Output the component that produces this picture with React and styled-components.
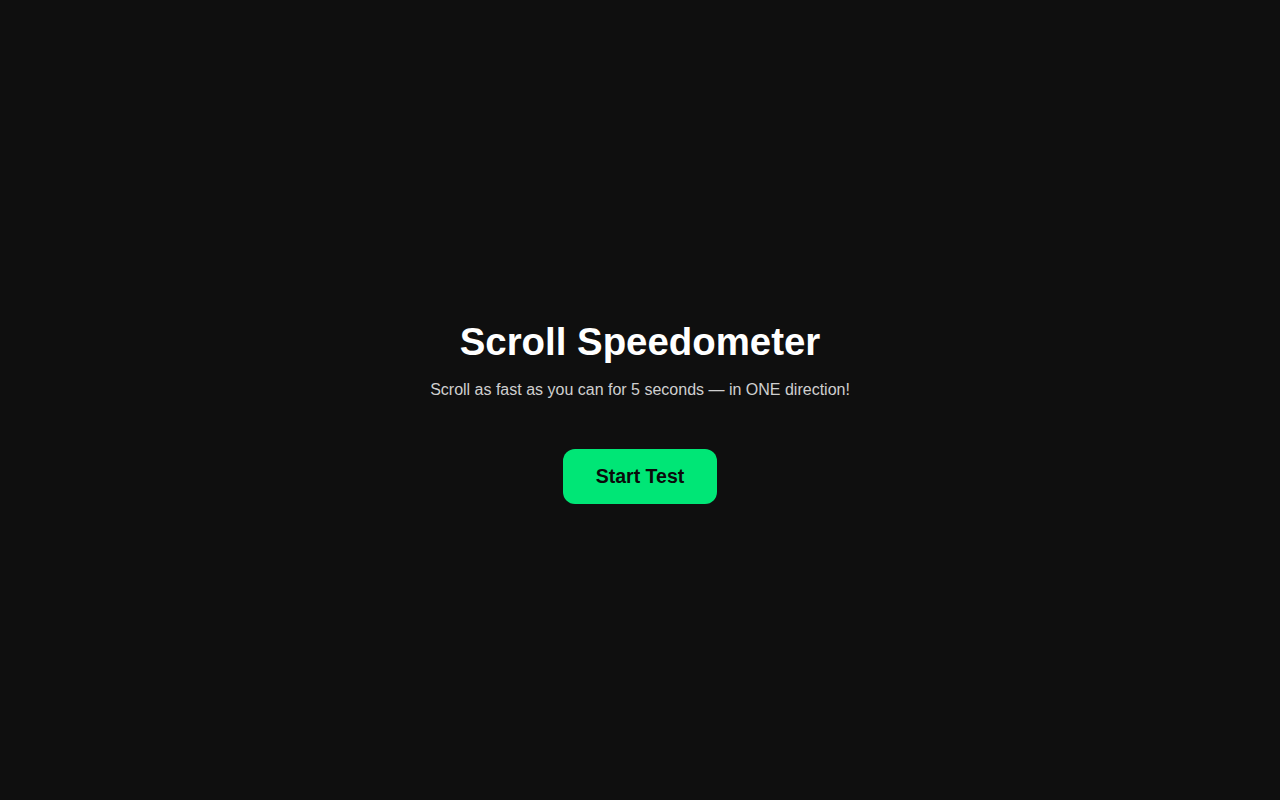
import React from 'react'
import styled, { createGlobalStyle } from 'styled-components'

const GlobalStyle = createGlobalStyle`
  html, body {
    margin: 0;
    padding: 0;
    background: #0f0f0f;
  }
  body {
    font-family: "Liberation Sans", Arial, sans-serif;
    color: #fff;
  }
`

const Page = styled.main`
  min-height: 100vh;
  box-sizing: border-box;
  padding-top: 23px;
  display: flex;
  flex-direction: column;
  align-items: center;
  justify-content: center;
  text-align: center;
`

const Title = styled.h1`
  margin: 0 0 17px;
  font-size: 2.4rem;
  font-weight: 700;
  color: #fff;
`

const Subtitle = styled.p`
  margin: 0;
  font-size: 16px;
  color: #cfcfcf;
`

const StartButton = styled.button`
  margin-top: 50px;
  height: 55px;
  padding: 0 33px;
  border: none;
  border-radius: 12px;
  background: #00e676;
  color: #0a0a0a;
  font-family: "Liberation Sans", Arial, sans-serif;
  font-size: 19.5px;
  font-weight: 700;
  cursor: pointer;
`

const App = () => {
  return (
    <Page>
      <GlobalStyle />
      <Title>Scroll Speedometer</Title>
      <Subtitle>Scroll as fast as you can for 5 seconds — in ONE direction!</Subtitle>
      <StartButton>Start Test</StartButton>
    </Page>
  )
}

export default App
